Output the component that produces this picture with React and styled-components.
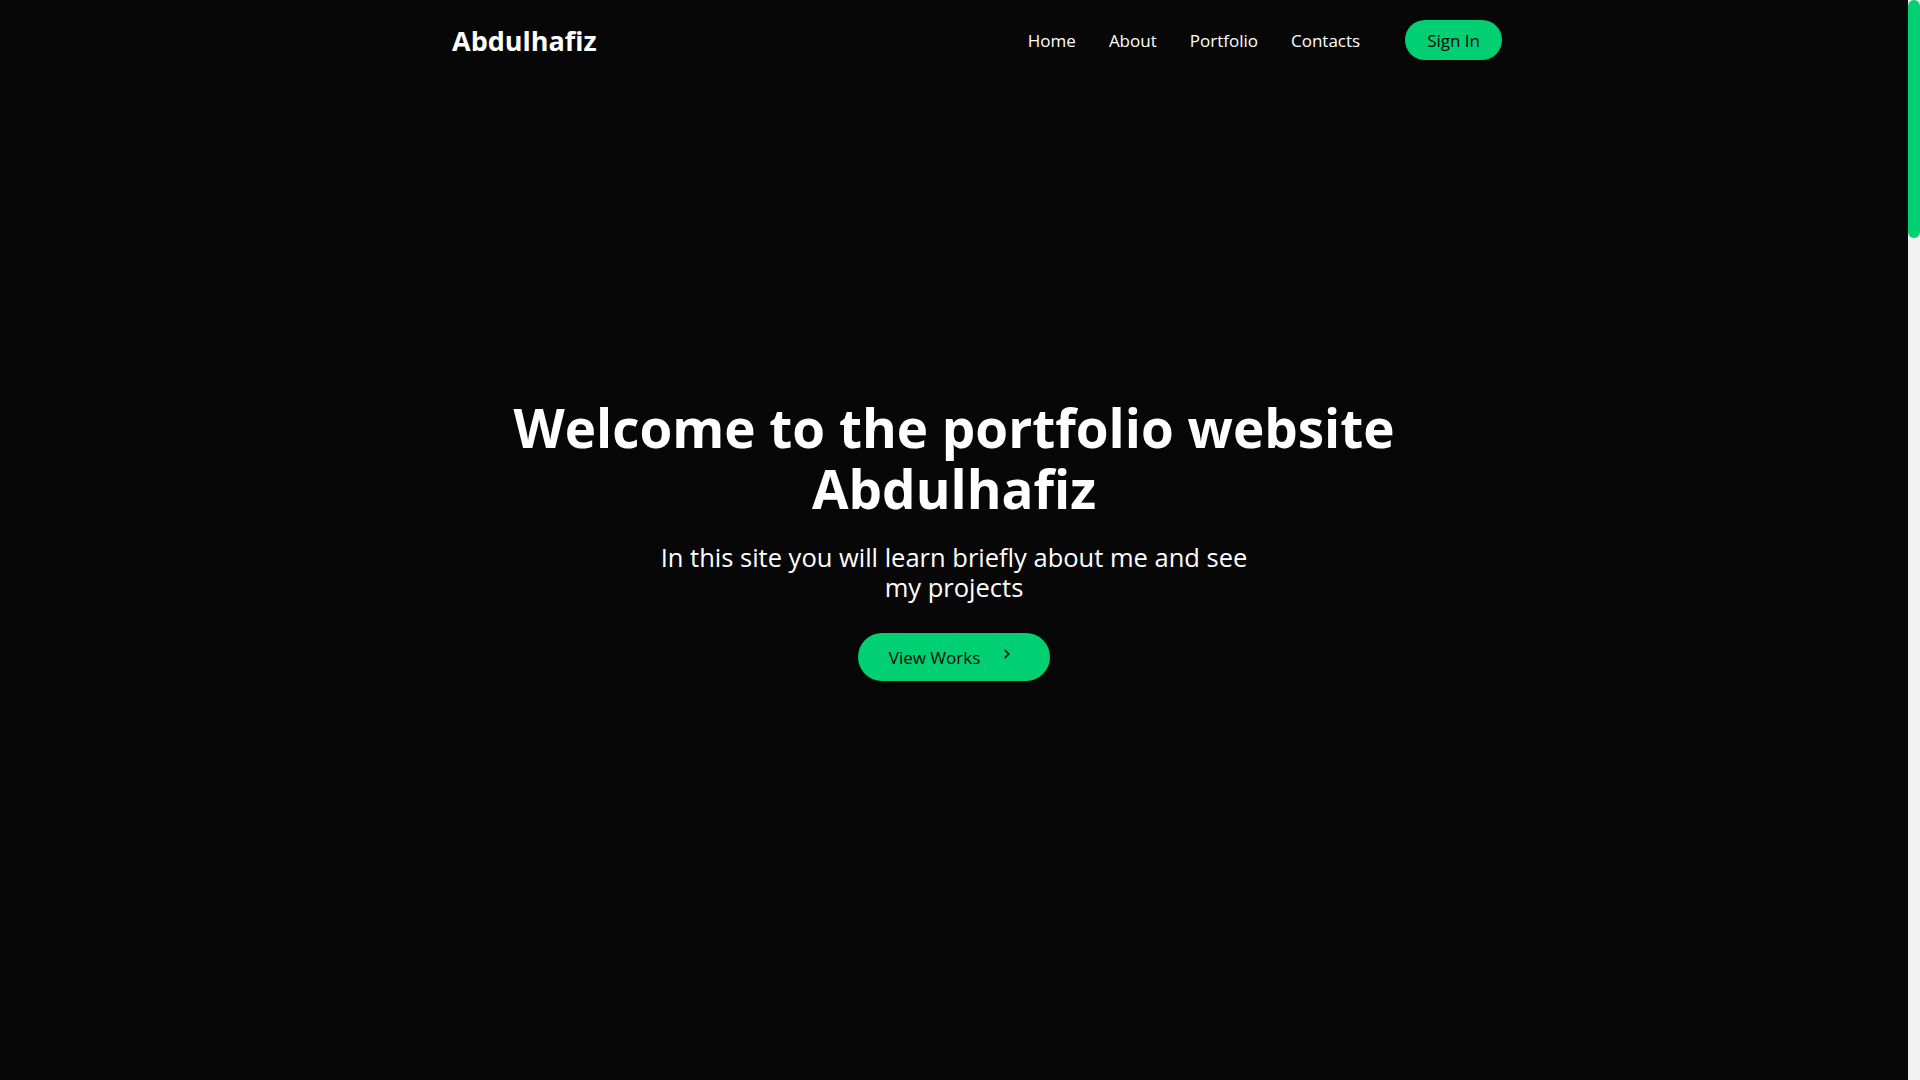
import React from "react";
import styled, { createGlobalStyle } from "styled-components";
import { FiChevronRight } from "react-icons/fi";

const GlobalStyle = createGlobalStyle`
  * {
    box-sizing: border-box;
  }

  body {
    margin: 0;
    background: #070707;
    color: #fff;
    font-family: "Open Sans", "Noto Sans", sans-serif;
  }
`;

export default function App() {
  return (
    <Shell>
      <GlobalStyle />
      <Main>
        <Header>
          <HeaderInner>
            <Logo href="#">Abdulhafiz</Logo>
            <Nav>
              <NavLink href="#">Home</NavLink>
              <NavLink href="#">About</NavLink>
              <NavLink href="#">Portfolio</NavLink>
              <NavLink href="#">Contacts</NavLink>
            </Nav>
            <SignIn>Sign In</SignIn>
          </HeaderInner>
        </Header>

        <Hero>
          <Title>
            Welcome to the portfolio website
            <br />
            Abdulhafiz
          </Title>
          <Subtitle>
            In this site you will learn briefly about me and see my projects
          </Subtitle>
          <WorksButton>
            View Works
            <FiChevronRight size={14} strokeWidth={3} />
          </WorksButton>
        </Hero>

        <Section id="about" />
        <Section id="portfolio" />
        <Section id="contacts" />
      </Main>

      {/* page scroll indicator (green thumb on a light track) */}
      <ScrollRail>
        <ScrollThumb />
      </ScrollRail>
    </Shell>
  );
}

const Shell = styled.div`
  display: flex;
  align-items: flex-start;
`;

const Main = styled.main`
  flex: 1;
  min-width: 0;
`;

const ScrollRail = styled.div`
  position: sticky;
  top: 0;
  flex-shrink: 0;
  width: 12px;
  height: 100vh;
  background: #f1f1f1;
`;

const ScrollThumb = styled.div`
  height: 238px;
  border-radius: 6px;
  background: #00cf72;
`;

const Header = styled.header`
  position: fixed;
  top: 0;
  left: 0;
  right: 12px;
  z-index: 10;
  background: #070707;
`;

const HeaderInner = styled.div`
  width: 1140px;
  height: 80px;
  margin: 0 auto;
  padding: 0 22px 0 68px;
  display: flex;
  align-items: center;
`;

const Logo = styled.a`
  font-size: 27px;
  font-weight: 700;
  color: #fff;
  text-decoration: none;
`;

const Nav = styled.nav`
  margin-left: auto;
  display: flex;
  align-items: center;
  gap: 33px;
`;

const NavLink = styled.a`
  font-size: 17px;
  color: #fff;
  text-decoration: none;

  &:hover {
    color: #00cf72;
  }
`;

const SignIn = styled.button`
  margin-left: 45px;
  height: 40px;
  padding: 0 22px;
  border: none;
  border-radius: 20px;
  background: #00cf72;
  color: #0a0a0a;
  font-family: inherit;
  font-size: 17px;
  cursor: pointer;
`;

const Hero = styled.section`
  height: 100vh;
  display: flex;
  flex-direction: column;
  align-items: center;
  justify-content: center;
  text-align: center;
  padding-bottom: 2px;
`;

const Title = styled.h1`
  margin: 0;
  font-size: 53px;
  line-height: 61px;
  font-weight: 700;
  color: #fff;
`;

const Subtitle = styled.p`
  margin: 23px 0 0;
  max-width: 600px;
  font-size: 25.5px;
  line-height: 30px;
  font-weight: 400;
  color: #fff;
`;

const WorksButton = styled.button`
  margin-top: 31px;
  height: 48px;
  padding: 0 36px 0 31px;
  display: flex;
  align-items: center;
  gap: 20px;
  border: none;
  border-radius: 24px;
  background: #00cf72;
  color: #0a0a0a;
  font-family: inherit;
  font-size: 17px;
  cursor: pointer;

  svg {
    margin-top: -6px;
  }
`;

const Section = styled.section`
  min-height: 1274px;
`;
